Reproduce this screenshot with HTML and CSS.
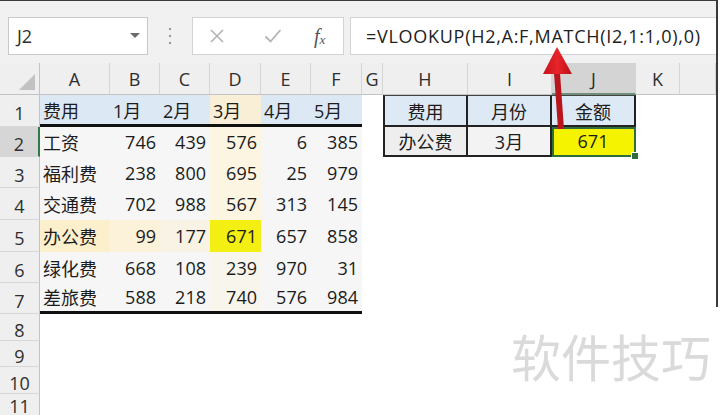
FILE: index.html
```html
<!DOCTYPE html>
<html lang="zh-CN">
<head>
<meta charset="utf-8">
<title>VLOOKUP MATCH</title>
<link rel="stylesheet" href="styles.css">
</head>
<body>
<div class="app">
  <div class="toolbar">
    <div class="namebox">
      <span class="ref">J2</span>
      <svg class="dd" width="10" height="6" viewBox="0 0 10 6"><path d="M0 0H10L5 5Z" fill="#6b6b6b"/></svg>
    </div>
    <div class="grip">
      <svg width="4" height="18" viewBox="0 0 4 18"><circle cx="2" cy="2" r="1.2" fill="#9a9a9a"/><circle cx="2" cy="9" r="1.2" fill="#9a9a9a"/><circle cx="2" cy="16" r="1.2" fill="#9a9a9a"/></svg>
    </div>
    <div class="btns">
      <svg class="ico-x" width="16" height="16" viewBox="0 0 16 16"><path d="M2 2L14 14M14 2L2 14" stroke="#b3b3b3" stroke-width="1.6" fill="none"/></svg>
      <svg class="ico-ok" width="18" height="16" viewBox="0 0 18 16"><path d="M1.5 8.5L6.5 13.5L16.5 2" stroke="#b3b3b3" stroke-width="1.8" fill="none"/></svg>
      <span class="fx"><i>f</i><sub>x</sub></span>
    </div>
    <div class="formula">=VLOOKUP(H2,A:F,MATCH(I2,1:1,0),0)</div>
  </div>

  <div class="sheet">
    <!-- column headers -->
    <div class="corner"><span class="tri"></span></div>
    <div class="ch">A</div><div class="ch">B</div><div class="ch">C</div><div class="ch">D</div><div class="ch">E</div><div class="ch">F</div><div class="ch">G</div><div class="ch">H</div><div class="ch">I</div><div class="ch sel">J</div><div class="ch">K</div><div class="ch"></div>

    <!-- row 1 -->
    <div class="rh">1</div>
    <div class="c t1">费用</div><div class="c t1">1月</div><div class="c t1">2月</div><div class="c t1 d1">3月</div><div class="c t1">4月</div><div class="c t1">5月</div>
    <div class="c"></div>
    <div class="c lk lkh lkl lkt">费用</div><div class="c lk lkh lkt">月份</div><div class="c lk lkh lkt">金额</div>
    <div class="c"></div><div class="c"></div>

    <!-- row 2 -->
    <div class="rh sel">2</div>
    <div class="c dat txt">工资</div><div class="c dat num">746</div><div class="c dat num">439</div><div class="c dat num dcol">576</div><div class="c dat num">6</div><div class="c dat num">385</div>
    <div class="c"></div>
    <div class="c lk lkl g1">办公费</div><div class="c lk g2">3月</div><div class="c lk hit">671<span class="handle"></span></div>
    <div class="c"></div><div class="c"></div>

    <!-- row 3 -->
    <div class="rh">3</div>
    <div class="c dat txt">福利费</div><div class="c dat num">238</div><div class="c dat num">800</div><div class="c dat num dcol">695</div><div class="c dat num">25</div><div class="c dat num">979</div>
    <div class="c rest"></div>

    <!-- row 4 -->
    <div class="rh">4</div>
    <div class="c dat txt">交通费</div><div class="c dat num">702</div><div class="c dat num">988</div><div class="c dat num dcol">567</div><div class="c dat num">313</div><div class="c dat num">145</div>
    <div class="c rest"></div>

    <!-- row 5 -->
    <div class="rh">5</div>
    <div class="c dat txt r5a">办公费</div><div class="c dat num r5b">99</div><div class="c dat num r5c">177</div><div class="c dat num r5d">671</div><div class="c dat num">657</div><div class="c dat num">858</div>
    <div class="c rest"></div>

    <!-- row 6 -->
    <div class="rh">6</div>
    <div class="c dat txt">绿化费</div><div class="c dat num">668</div><div class="c dat num">108</div><div class="c dat num dcol2">239</div><div class="c dat num">970</div><div class="c dat num">31</div>
    <div class="c rest"></div>

    <!-- row 7 -->
    <div class="rh">7</div>
    <div class="c dat txt t7">差旅费</div><div class="c dat num t7">588</div><div class="c dat num t7">218</div><div class="c dat num t7 dcol2">740</div><div class="c dat num t7">576</div><div class="c dat num t7">984</div>
    <div class="c rest"></div>

    <div class="rh">8</div><div class="c full"></div>
    <div class="rh">9</div><div class="c full"></div>
    <div class="rh">10</div><div class="c full"></div>
    <div class="rh last">11</div><div class="c full"></div>
  </div>

  <svg class="arrow" width="44" height="96" viewBox="0 0 44 96">
    <defs>
      <linearGradient id="hg" x1="0" y1="0" x2="1" y2="0">
        <stop offset="0" stop-color="#c4141a"/>
        <stop offset="0.5" stop-color="#e8242a"/>
        <stop offset="1" stop-color="#b81218"/>
      </linearGradient>
    </defs>
    <path d="M19 32L25 32L29 88L23 88Z" fill="#b8161c"/>
    <path d="M22 6L37 33L8 33Z" fill="url(#hg)"/>
  </svg>
</div>
<div class="wm">软件技巧</div>
</body>
</html>
```

FILE: styles.css
```css
* { box-sizing: border-box; }

body {
  position: relative;
  margin: 0;
  width: 720px;
  height: 415px;
  overflow: hidden;
  background: #ffffff;
  font-family: "Open Sans", "Noto Sans CJK SC", sans-serif;
  color: #1c1c1c;
}

.app {
  position: relative;
  width: 718px;
  height: 415px;
  border-top: 1px solid #3a3a3a;
  border-right: 2px solid #3a3a3a;
  overflow: hidden;
  background: #fff;
}

/* ---------- formula bar ---------- */
.toolbar {
  height: 62px;
  background: #f1f1f1;
  display: flex;
  align-items: flex-start;
  padding-top: 16px;
}

.namebox {
  margin-left: 8px;
  width: 140px;
  height: 38px;
  background: #fff;
  border: 1px solid #c9c9c9;
  display: flex;
  align-items: center;
  justify-content: space-between;
  padding: 0 7px 0 8px;
}

.ref {
  font-size: 18px;
  color: #2e2e2e;
}

.grip {
  width: 44px;
  height: 38px;
  display: flex;
  align-items: center;
  justify-content: center;
}

.btns {
  width: 152px;
  height: 38px;
  background: #fff;
  border: 1px solid #d3d3d3;
  display: flex;
  align-items: center;
  padding-left: 16px;
}

.ico-x { margin-right: 39px; }
.ico-ok { margin-right: 32px; }

.fx {
  font-family: "Liberation Serif", serif;
  color: #555;
  font-size: 20px;
  line-height: 1;
}
.fx i { font-style: italic; }
.fx sub {
  font-size: 13px;
  font-style: italic;
  vertical-align: -1px;
}

.formula {
  flex: 1;
  margin-left: 6px;
  height: 38px;
  background: #fff;
  border: 1px solid #d3d3d3;
  border-right: none;
  display: flex;
  align-items: center;
  padding-left: 15px;
  font-size: 18px;
  letter-spacing: 0.72px;
  color: #222;
  white-space: nowrap;
}

/* ---------- sheet ---------- */
.sheet {
  display: grid;
  grid-template-columns: 40px 70px 50px 50px 51px 50px 51px 21px 85px 84px 84px 44px 1fr;
  grid-template-rows: 32px 32px 30px 31px 32px 32px 31px 31px 27px 26px 27px 26px;
  font-size: 18px;
}

.corner {
  position: relative;
  background: #efefef;
  border-right: 1px solid #c3c3c3;
  border-bottom: 1px solid #c3c3c3;
}
.tri {
  position: absolute;
  right: 4px;
  bottom: 4px;
  width: 0;
  height: 0;
  border-left: 16px solid transparent;
  border-bottom: 16px solid #c2c2c2;
}

.ch {
  background: #efefef;
  border-right: 1px solid #d5d5d5;
  border-bottom: 1px solid #c3c3c3;
  display: flex;
  align-items: center;
  justify-content: center;
  color: #2e2e2e;
  padding-top: 1px;
}
.ch.sel {
  background: #d4d4d4;
  border-bottom: 2px solid #6f8f78;
}

.rh {
  grid-column: 1;
  background: #efefef;
  border-right: 1px solid #c3c3c3;
  border-bottom: 1px solid #d7d7d7;
  display: flex;
  align-items: center;
  justify-content: center;
  padding-top: 5px;
  color: #2e2e2e;
}
.rh.sel {
  background: #d6d6d6;
  border-right: 2px solid #2f7a46;
}
.rh.last {
  align-items: flex-start;
  padding-top: 2px;
  line-height: 1.2;
}

.c {
  display: flex;
  align-items: center;
  white-space: nowrap;
}

.rest { grid-column: 8 / -1; }
.full { grid-column: 2 / -1; }

/* data table */
.t1 {
  background: #dce8f4;
  padding-left: 3px;
  border-bottom: 3px solid #111;
}
.d1 { background: #f8efd6; }

.dat { background: #f6f6f6; }
.txt { padding-left: 3px; }
.num { justify-content: flex-end; padding-right: 4px; }
.dcol { background: #fbf5e1; }
.dcol2 { background: #f8f5ec; }
.r5a { background: #fcefcc; }
.r5b { background: #fbf2d9; }
.r5c { background: #f8f3e4; }
.r5d { background: #f4ef12; }
.t7 { border-bottom: 3px solid #111; }

/* lookup table */
.lk {
  position: relative;
  justify-content: center;
  border-right: 2px solid #222;
  border-bottom: 2px solid #222;
}
.lkl { border-left: 2px solid #222; }
.lkt { border-top: 1px solid #444; }
.lkh { background: #dde9f4; }
.g1 { background: #eeeeee; }
.g2 { background: #f3f3f3; }
.hit {
  background: #f5f300;
  outline: 2px solid #2f6d3e;
  outline-offset: -2px;
}
.handle {
  position: absolute;
  right: -5px;
  bottom: -5px;
  width: 8px;
  height: 8px;
  background: #2f6d3e;
  border: 1px solid #fff;
  z-index: 2;
}

/* overlays */
.arrow {
  position: absolute;
  left: 535px;
  top: 40px;
}

.wm {
  position: absolute;
  left: 503px;
  top: 307px;
  width: 217px;
  height: 108px;
  background: #fff;
  padding: 23px 0 0 8px;
  font-family: "Noto Sans CJK SC", sans-serif;
  font-size: 50px;
  line-height: 1;
  color: #dadada;
  white-space: nowrap;
}
```
